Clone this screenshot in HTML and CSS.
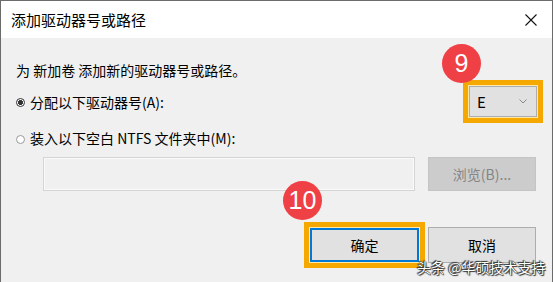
FILE: index.html
```html
<!DOCTYPE html>
<html lang="zh-CN">
<head>
<meta charset="utf-8">
<title>添加驱动器号或路径</title>
<link rel="stylesheet" href="styles.css">
</head>
<body>
<div class="window">
  <div class="titlebar">
    <span class="title">添加驱动器号或路径</span>
    <svg class="close" width="12" height="12" viewBox="0 0 12 12"><path d="M0.5 0.5 L11.5 11.5 M11.5 0.5 L0.5 11.5" stroke="#111" stroke-width="1.1" fill="none"/></svg>
  </div>
  <div class="content">
    <div class="desc">为 新加卷 添加新的驱动器号或路径。</div>
    <div class="row row-assign">
      <label class="option"><span class="radio checked"></span>分配以下驱动器号(A):</label>
      <div class="highlight combo-hl">
        <div class="combo"><span>E</span>
          <svg width="8" height="5" viewBox="0 0 8 5"><path d="M0.5 0.5 L4 4 L7.5 0.5" stroke="#888" stroke-width="1" fill="none"/></svg>
        </div>
        <span class="badge badge-9">9</span>
      </div>
    </div>
    <div class="row row-mount">
      <label class="option"><span class="radio"></span>装入以下空白 NTFS 文件夹中(M):</label>
    </div>
    <div class="row row-path">
      <div class="pathbox"></div>
      <div class="btn btn-disabled">浏览(B)...</div>
    </div>
    <div class="row row-actions">
      <div class="highlight ok-hl">
        <div class="btn btn-default">确定</div>
        <span class="badge badge-10">10</span>
      </div>
      <div class="btn">取消</div>
      <span class="watermark">头条 @华硕技术支持</span>
    </div>
  </div>
</div>
</body>
</html>
```
FILE: styles.css
```css
* { box-sizing: border-box; }
html, body { margin: 0; padding: 0; }
body {
  width: 553px;
  height: 282px;
  overflow: hidden;
  font-family: "Noto Sans CJK SC", "Microsoft YaHei", sans-serif;
  color: #000;
  background: #f0f0f0;
}
.window {
  width: 553px;
  height: 282px;
  border: 1px solid #6b6b6b;
  border-bottom: none;
  background: #f0f0f0;
  display: flex;
  flex-direction: column;
}
.titlebar {
  height: 37px;
  background: #fff;
  display: flex;
  align-items: center;
  justify-content: space-between;
  padding: 0 15px 0 10px;
}
.title { font-size: 15px; line-height: 37px; }
.close { display: block; }
.content {
  position: relative;
  flex: 1;
  padding: 0 0 0 15px;
  font-size: 14px;
}
.desc {
  margin-top: 22px;
  line-height: 20px;
  height: 20px;
}
.row { display: flex; align-items: center; }
.row-assign {
  height: 43px;
  justify-content: space-between;
  padding-right: 9px;
}
.option {
  display: flex;
  align-items: center;
  line-height: 20px;
}
.radio {
  width: 9px;
  height: 9px;
  border-radius: 50%;
  border: 1px solid #9a9a9a;
  background: #fff;
  margin-right: 5px;
  position: relative;
  top: 1px;
}
.radio.checked {
  border-color: #333;
  background: radial-gradient(circle, #333 0 2.2px, #fff 2.8px);
}
.row-mount { margin-top: 5px; height: 20px; }
.highlight {
  position: relative;
  border: 5px solid #f4a800;
  padding: 1px;
  background: #fde9a8;
}
.combo {
  width: 68px;
  height: 31px;
  background: #e1e1e1;
  border: 1px solid #adadad;
  display: flex;
  align-items: center;
  justify-content: space-between;
  padding: 0 9px 0 7px;
  font-size: 15px;
}
.row-path { margin-top: 9px; height: 34px; }
.pathbox {
  margin-left: 27px;
  width: 372px;
  height: 34px;
  border: 1px solid #d4d4d4;
  box-shadow: inset 0 0 0 1px #fafafa;
  background: #f0f0f0;
}
.btn {
  width: 108px;
  height: 36px;
  background: #e1e1e1;
  border: 1px solid #adadad;
  display: flex;
  align-items: center;
  justify-content: center;
  font-size: 14px;
}
.row-path .btn { margin-left: 13px; height: 34px; }
.btn-disabled {
  background: #cccccc;
  border-color: #c4c4c4;
  color: #858585;
}
.row-actions {
  margin-top: 31px;
  height: 46px;
  padding-left: 288px;
  position: relative;
}
.ok-hl { margin-right: 3px; }
.btn-default {
  width: 109px;
  height: 34px;
  border: 2px solid #0078d7;
}
.badge {
  position: absolute;
  width: 39px;
  height: 39px;
  border-radius: 50%;
  background: #ef4046;
  color: #fff;
  font-family: "Liberation Sans", Arial, sans-serif;
  font-size: 25px;
  line-height: 39px;
  text-align: center;
}
.badge-9 { left: -26px; top: -41px; }
.badge-10 { left: -26px; top: -46px; }
.watermark {
  position: absolute;
  left: 401px;
  top: 36px;
  color: #fff;
  font-size: 14px;
  line-height: 18px;
  white-space: nowrap;
  text-shadow: 0 0 1px #222, 0 0 1px #222, 1px 1px 1px #333, -1px -1px 1px #333;
}
```
